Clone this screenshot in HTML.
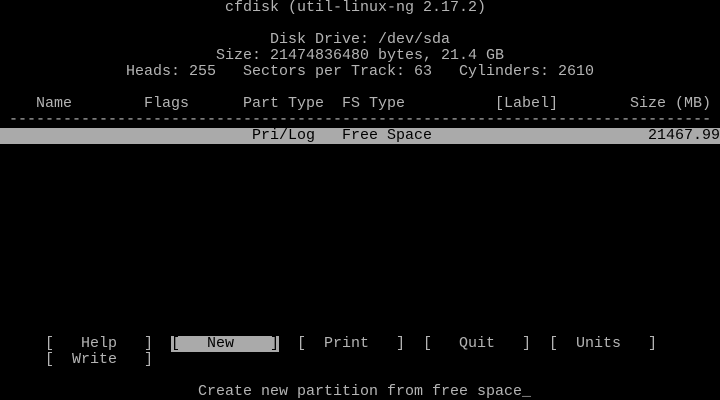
<!DOCTYPE html>
<html><head><meta charset="utf-8"><style>
html,body{margin:0;padding:0;background:#000;width:720px;height:400px;overflow:hidden;position:relative}
span{position:absolute;font-family:"Liberation Mono","DejaVu Sans Mono",monospace;font-size:15px;line-height:16px;height:16px;color:#b4b4b4;white-space:pre}
.bar{position:absolute;background:#aaa}
.k{color:#000}
</style></head><body>
<div class="bar" style="left:0;top:128px;width:720px;height:16px"></div>
<div class="bar" style="left:171px;top:336px;width:108px;height:16px"></div>
<span style="left:225px;top:0">cfdisk (util-linux-ng 2.17.2)</span>
<span style="left:270px;top:32px">Disk Drive: /dev/sda</span>
<span style="left:216px;top:48px">Size: 21474836480 bytes, 21.4 GB</span>
<span style="left:126px;top:64px">Heads: 255</span>
<span style="left:243px;top:64px">Sectors per Track: 63</span>
<span style="left:459px;top:64px">Cylinders: 2610</span>
<span style="left:36px;top:96px">Name</span>
<span style="left:144px;top:96px">Flags</span>
<span style="left:243px;top:96px">Part Type</span>
<span style="left:342px;top:96px">FS Type</span>
<span style="left:495px;top:96px">[Label]</span>
<span style="left:630px;top:96px">Size (MB)</span>
<span style="left:9px;top:112px;width:702px;overflow:hidden">------------------------------------------------------------------------------</span>
<span class="k" style="left:252px;top:128px">Pri/Log</span>
<span class="k" style="left:342px;top:128px">Free Space</span>
<span class="k" style="left:648px;top:128px">21467.99</span>
<span style="left:45px;top:336px">[</span><span style="left:81px;top:336px">Help</span><span style="left:144px;top:336px">]</span>
<span class="k" style="left:171px;top:336px">[</span><span class="k" style="left:207px;top:336px">New</span><span class="k" style="left:270px;top:336px">]</span>
<span style="left:297px;top:336px">[</span><span style="left:324px;top:336px">Print</span><span style="left:396px;top:336px">]</span>
<span style="left:423px;top:336px">[</span><span style="left:459px;top:336px">Quit</span><span style="left:522px;top:336px">]</span>
<span style="left:549px;top:336px">[</span><span style="left:576px;top:336px">Units</span><span style="left:648px;top:336px">]</span>
<span style="left:45px;top:352px">[</span><span style="left:72px;top:352px">Write</span><span style="left:144px;top:352px">]</span>
<span style="left:198px;top:384px">Create new partition from free space_</span>
</body></html>
